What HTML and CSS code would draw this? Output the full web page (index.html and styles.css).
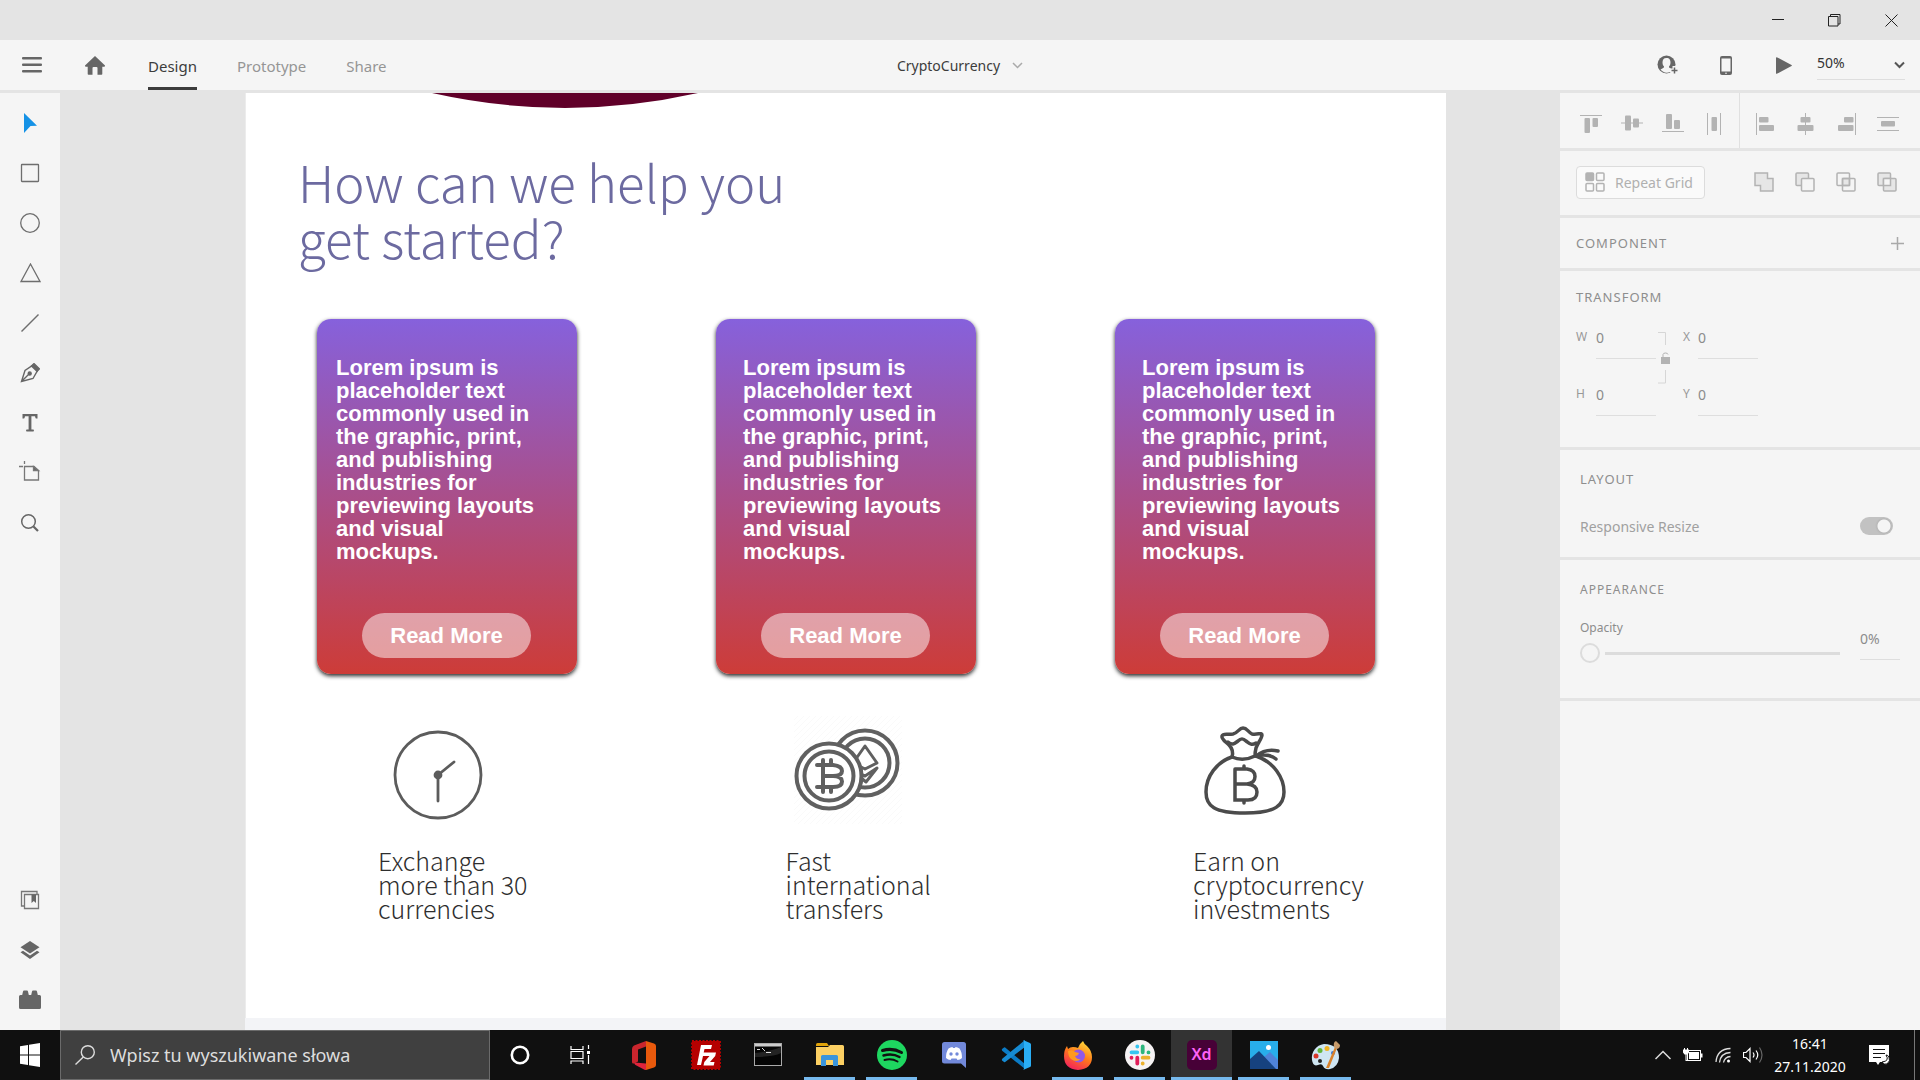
FILE: index.html
```html
<!DOCTYPE html>
<html lang="en">
<head>
<meta charset="utf-8">
<title>CryptoCurrency</title>
<link rel="stylesheet" href="styles.css">
</head>
<body>
<div class="app">
  <div class="titlebar">
    <button class="win-btn" aria-label="Minimize"><svg width="12" height="12"><path d="M0 5.500h12" stroke="#222"/></svg></button>
    <button class="win-btn" aria-label="Restore"><svg width="13" height="13" fill="none" stroke="#222"><path d="M.5 2.500h9.500v9.500h-9.500zM2.500 2.500v-2h9.500v9.500h-2"/></svg></button>
    <button class="win-btn" aria-label="Close"><svg width="13" height="13"><path d="M.5.5l12 12M12.500.5l-12 12" stroke="#222"/></svg></button>
  </div>

  <header class="toolbar">
    <div class="toolbar-left">
      <button class="icon-btn menu-btn" aria-label="Menu"><svg width="20" height="16" fill="#666"><rect width="20" height="2.500" rx="1"/><rect y="6.500" width="20" height="2.500" rx="1"/><rect y="13" width="20" height="2.500" rx="1"/></svg></button>
      <button class="icon-btn home-btn" aria-label="Home"><svg width="20" height="19" fill="#666"><path d="M10 0l10 9.500q.3 1.200-1 1.200h-1.700V18q0 .8-.8.800h-4V12q0-1-1-1h-3q-1 0-1 1v6.800h-4q-.8 0-.8-.8v-7.300H1q-1.300 0-1-1.200z"/></svg></button>
      <nav class="tabs">
        <a class="tab active" href="#design">Design</a>
        <a class="tab" href="#prototype">Prototype</a>
        <a class="tab" href="#share">Share</a>
      </nav>
    </div>
    <button class="doc-title">CryptoCurrency <svg width="11" height="7" fill="none" stroke="#aaa" stroke-width="1.500"><path d="M1 1l4.500 4.500L10 1"/></svg></button>
    <div class="toolbar-right">
      <button class="icon-btn action" aria-label="Invite"><svg width="22" height="20" viewBox="0 0 22 20"><circle cx="9.500" cy="9.500" r="9" fill="#666"/><path d="M9.500 3C6.500 3 5.500 5 5.500 7.500c0 2 .7 3 1.500 4 .3 1-.5 1.500-3.500 3 3 4 9 4.500 12 0-3-1.500-3.800-2-3.500-3 .8-1 1.500-2 1.500-4C13.500 5 12.500 3 9.500 3z" fill="#f5f5f5"/><path d="M17.500 11v8M13 15.500h9" stroke="#f5f5f5" stroke-width="4"/><path d="M17.500 12.500v6M14.500 15.500h6" stroke="#666" stroke-width="1.500"/></svg></button>
      <button class="icon-btn action" aria-label="Device preview"><svg width="12" height="19" viewBox="0 0 12 19"><rect width="12" height="19" rx="2" fill="#666"/><rect x="1.500" y="2.500" width="9" height="13" fill="#f5f5f5"/><circle cx="6" cy="17.300" r=".8" fill="#f5f5f5"/></svg></button>
      <button class="icon-btn action" aria-label="Play"><svg width="16" height="17"><path d="M0 1q0-1.300 1.300-.6L15.500 8q.8.500 0 1L1.300 16.600Q0 17.300 0 16z" fill="#666"/></svg></button>
      <div class="zoom-box">
        <select class="zoom" aria-label="Zoom"><option>50%</option></select>
        <svg class="zoom-chevron" width="11" height="8" fill="none" stroke="#555" stroke-width="2"><path d="M1 1.500L5.500 6 10 1.500"/></svg>
      </div>
    </div>
  </header>

  <div class="workspace">
    <aside class="tools">
      <div class="tool-group">
        <button class="tool" aria-label="Select"><svg width="20" height="20"><path d="M4 0L17 12.700l-6.500.4L4 20z" fill="#1592e6"/></svg></button>
        <button class="tool" aria-label="Rectangle"><svg width="20" height="20" fill="none" stroke="#6e6e6e" stroke-width="1.300"><rect x="1.500" y="1.500" width="17" height="17" rx=".5"/></svg></button>
        <button class="tool" aria-label="Ellipse"><svg width="20" height="20" fill="none" stroke="#6e6e6e" stroke-width="1.300"><circle cx="10" cy="10" r="9.300"/></svg></button>
        <button class="tool" aria-label="Polygon"><svg width="22" height="20" fill="none" stroke="#6e6e6e" stroke-width="1.300"><path d="M11.500 1L21 18.500H2z"/></svg></button>
        <button class="tool" aria-label="Line"><svg width="20" height="20" fill="none" stroke="#6e6e6e" stroke-width="1.400"><path d="M1.500 18.500l17-17"/></svg></button>
        <button class="tool" aria-label="Pen"><svg width="20" height="20" fill="none" stroke="#666" stroke-width="1.400"><path d="M1.500 18.500L5 7.500 12.500 2.500l5 5L13 15.500z M1.500 18.500l7-7"/><circle cx="9.700" cy="10.500" r="1.500" fill="#666"/><path d="M11.500 3L14 .6l5.400 5.200L17 8.300z" fill="#666"/></svg></button>
        <button class="tool" aria-label="Text"><svg width="20" height="20" fill="#666"><path d="M2.500 1h15v4.500q-1.600.3-2-.5L15 3.300h-3.600V16.500h2.100q1 .8 0 2h-7q-1-1 0-2h2.100V3.300H5L4.500 5q-.4.800-2 .5z"/></svg></button>
        <button class="tool" aria-label="Artboard"><svg width="25" height="26" fill="none" stroke="#777" stroke-width="1.300"><path d="M6.500 6.500h9.500l4.500 4V20h-14zM6.500 1v3M1 6.500h4"/><path d="M15.500 6.500v4h5z" fill="#666"/></svg></button>
        <button class="tool" aria-label="Zoom tool"><svg width="20" height="20" fill="none" stroke="#666"><circle cx="8.500" cy="8.500" r="6.800" stroke-width="1.500"/><path d="M13.500 13.500l4.500 4.500" stroke-width="2.200"/></svg></button>
      </div>
      <div class="tool-group">
        <button class="tool" aria-label="Assets"><svg width="20" height="20" fill="none" stroke="#777" stroke-width="1.300"><path d="M4 16H1.500V1.500H17V4"/><path d="M4.500 4.500h14v14h-14z"/><path d="M11.500 4.500h4.500v8.500l-2.200-2-2.300 2z" fill="#666" stroke="none"/></svg></button>
        <button class="tool" aria-label="Layers"><svg width="20" height="18" fill="#666"><path d="M10 0l9.500 6.300L10 12.500.5 6.300z"/><path d="M3 9.700l7 4.800 7-4.800 2.500 1.600L10 18 .5 11.300z"/></svg></button>
        <button class="tool" aria-label="Plugins"><svg width="22" height="20" fill="#666"><path d="M0 6.500q0-1.500 1.500-1.500h1.700L4 1.500q.2-1 1-1h3q.8 0 1 1L9.800 5h2.400L13 1.500q.2-1 1-1h3q.8 0 1 1l.8 3.500h1.700Q22 5 22 6.500v11q0 1.500-1.500 1.500h-19Q0 19 0 17.500z"/></svg></button>
      </div>
    </aside>

    <main class="canvas">
      <div class="artboard">
        <svg class="arc" width="266" height="15"><path d="M0 0A608 608 0 0 0 266 0z" fill="#600029"/></svg>
        <h1 class="headline">How can we help you<br>get started?</h1>
        <div class="cards">
          <article class="card card-first">
            <p class="card-text">Lorem ipsum is<br>placeholder text<br>commonly used in<br>the graphic, print,<br>and publishing<br>industries for<br>previewing layouts<br>and visual<br>mockups.</p>
            <button class="read-more">Read More</button>
          </article>
          <article class="card">
            <p class="card-text">Lorem ipsum is<br>placeholder text<br>commonly used in<br>the graphic, print,<br>and publishing<br>industries for<br>previewing layouts<br>and visual<br>mockups.</p>
            <button class="read-more">Read More</button>
          </article>
          <article class="card">
            <p class="card-text">Lorem ipsum is<br>placeholder text<br>commonly used in<br>the graphic, print,<br>and publishing<br>industries for<br>previewing layouts<br>and visual<br>mockups.</p>
            <button class="read-more">Read More</button>
          </article>
        </div>
        <div class="features">
          <section class="feature">
            <svg class="feature-icon" viewBox="0 0 120 108" fill="none" stroke="#5c5c5c" stroke-width="2.800" stroke-linecap="round"><circle cx="60" cy="59" r="43"/><circle cx="60" cy="59" r="3" fill="#5c5c5c"/><path d="M60 59v26M60 59l16-13"/></svg>
            <p class="feature-text">Exchange<br>more than 30<br>currencies</p>
          </section>
          <section class="feature">
            <svg class="feature-icon" viewBox="0 0 120 108" fill="none" stroke="#606060" stroke-width="4" stroke-linecap="round" stroke-linejoin="round">
              <defs><pattern id="hatch" width="6" height="6" patternUnits="userSpaceOnUse"><path d="M0 6L6 0" stroke="#fafafa" stroke-width="1"/></pattern></defs>
              <rect x="8" y="0" width="108" height="108" fill="url(#hatch)" stroke="none"/>
              <circle cx="79" cy="47" r="32.500" fill="#fff"/><circle cx="79" cy="47" r="24.500"/>
              <path d="M79 30L91 47 79 53 67 47zM67 55l12 5 12-8-11 14z" stroke-width="3"/>
              <circle cx="43" cy="60" r="32.500" fill="#fff"/><circle cx="43" cy="60" r="24.500"/>
              <path d="M31 49h16q9 1 9 6 0 5-9 5 9 0 9 5.500 0 5.500-9 5.500H31M37 49v22M37 60h10M37 44v5M45 44v5M37 71v5M45 71v5"/>
            </svg>
            <p class="feature-text">Fast<br>international<br>transfers</p>
          </section>
          <section class="feature">
            <svg class="feature-icon" viewBox="0 0 120 108" fill="none" stroke="#4b4b4b" stroke-width="3.500" stroke-linecap="round" stroke-linejoin="round">
              <path d="M39 41C24 46 13 60 13 76c0 14 8 21 39 21s39-8 39-21c0-14-10-30-28-36"/>
              <path d="M39 41q2-7-3-12c-3-3-8-6-7-9s5-1 11-2c5-1 6-6 10-6s5 4 9 6c6 1 10-2 10 1s-4 8-6 13q-1 4-1 8q-12 6-23 1z"/>
              <path d="M35 26c5 4 7 1 10-1 3-3 5-3 8 0 3 2 5 5 10 2"/>
              <path d="M63 40q10-8 22-5M63 40q13-3 20 3"/>
              <path d="M42 53h12q8 1 8 7.500t-8 7.500H42M54 68q10 1 10 8 0 8-9 8H42V53M51 50v3M51 84v3" stroke-linejoin="miter"/>
            </svg>
            <p class="feature-text">Earn on<br>cryptocurrency<br>investments</p>
          </section>
        </div>
      </div>
      <div class="artboard-next"></div>
    </main>

    <aside class="inspector">
      <div class="panel align-panel">
        <div class="align-group">
          <button class="slot" aria-label="Align top"><svg width="22" height="20" fill="#b3b3b3"><rect y="1" width="22" height="1"/><rect x="4.500" y="4" width="5.500" height="15" rx="1"/><rect x="12.500" y="4" width="5.500" height="9" rx="1"/></svg></button>
          <button class="slot" aria-label="Align middle"><svg width="22" height="20" fill="#b3b3b3"><rect y="8.500" width="22" height="1"/><rect x="4" y="1.500" width="6" height="15" rx="1"/><rect x="12" y="4.500" width="6" height="9" rx="1"/></svg></button>
          <button class="slot" aria-label="Align bottom"><svg width="22" height="20" fill="#b3b3b3"><rect y="17" width="22" height="1"/><rect x="4" y="0" width="6" height="15" rx="1"/><rect x="12" y="6" width="6" height="9" rx="1"/></svg></button>
          <button class="slot" aria-label="Distribute horizontally"><svg width="22" height="22" fill="#b3b3b3"><rect x="4" width="1" height="22"/><rect x="17" width="1" height="22"/><rect x="8.500" y="4" width="5.500" height="14" rx="1"/></svg></button>
        </div>
        <div class="align-group">
          <button class="slot" aria-label="Align left"><svg width="20" height="22" fill="#b3b3b3"><rect x="1" width="1" height="22"/><rect x="4" y="4" width="9.500" height="5.500" rx="1"/><rect x="4" y="12" width="15" height="6" rx="1"/></svg></button>
          <button class="slot" aria-label="Align center"><svg width="20" height="22" fill="#b3b3b3"><rect x="9" width="1" height="22"/><rect x="4.500" y="4" width="10" height="5.500" rx="1"/><rect x="1.500" y="12" width="16" height="6" rx="1"/></svg></button>
          <button class="slot" aria-label="Align right"><svg width="20" height="22" fill="#b3b3b3"><rect x="18" width="1" height="22"/><rect x="7" y="4" width="9.500" height="5.500" rx="1"/><rect x="1" y="12" width="15.500" height="6" rx="1"/></svg></button>
          <button class="slot" aria-label="Distribute vertically"><svg width="22" height="22" fill="#b3b3b3"><rect y="4" width="22" height="1"/><rect y="17" width="22" height="1"/><rect x="4" y="8" width="14" height="5.500" rx="1"/></svg></button>
        </div>
      </div>

      <div class="panel grid-panel">
        <button class="repeat-grid"><svg width="20" height="20" fill="none" stroke="#b3b3b3" stroke-width="1.500"><rect x="1" y="1" width="7.500" height="7.500" rx="1" fill="#b3b3b3"/><rect x="11.500" y="1" width="7.500" height="7.500" rx="1"/><rect x="1" y="11.500" width="7.500" height="7.500" rx="1"/><rect x="11.500" y="11.500" width="7.500" height="7.500" rx="1"/></svg>Repeat Grid</button>
        <div class="bool-group">
          <button class="slot" aria-label="Add"><svg width="20" height="20" fill="#e6e6e6" stroke="#b3b3b3" stroke-width="1.500"><path d="M1 1h12.500v5.500h5.500v12.500H6.500v-5.500H1z"/></svg></button>
          <button class="slot" aria-label="Subtract"><svg width="20" height="20" fill="#e6e6e6" stroke="#b3b3b3" stroke-width="1.500"><rect x="1" y="1" width="12.500" height="12.500" rx="1"/><rect x="6.500" y="6.500" width="12.500" height="12.500" rx="1" fill="#f5f5f5"/></svg></button>
          <button class="slot" aria-label="Intersect"><svg width="20" height="20" fill="none" stroke="#b3b3b3" stroke-width="1.500"><path d="M6.500 6.500h7v7h-7z" fill="#e6e6e6"/><rect x="1" y="1" width="12.500" height="12.500" rx="1"/><rect x="6.500" y="6.500" width="12.500" height="12.500" rx="1"/></svg></button>
          <button class="slot" aria-label="Exclude overlap"><svg width="20" height="20" fill="#e6e6e6" stroke="#b3b3b3" stroke-width="1.500"><rect x="1" y="1" width="12.500" height="12.500" rx="1"/><rect x="6.500" y="6.500" width="12.500" height="12.500" rx="1"/><path d="M6.500 13.500v-7h7v7z" fill="#f5f5f5"/></svg></button>
        </div>
      </div>

      <div class="panel component-panel">
        <h2 class="panel-title">COMPONENT</h2>
        <button class="icon-btn" aria-label="Add component"><svg width="13" height="13"><path d="M6.500 0v13M0 6.500h13" stroke="#a9a9a9" stroke-width="1.500"/></svg></button>
      </div>

      <div class="panel transform-panel">
        <h2 class="panel-title">TRANSFORM</h2>
        <div class="fields">
          <label class="field-label" for="w">W</label><input class="field" id="w" value="0">
          <svg class="lock" width="14" height="52" fill="none" stroke="#d6d6d6"><path d="M1 .5h7.500V13M8.500 38v13H1"/><rect x="4" y="25" width="9" height="7" fill="#b3b3b3" stroke="none"/><path d="M6 25v-2.500q.2-1.500 2.500-1.500t2.500 1.500" stroke="#b3b3b3"/></svg>
          <label class="field-label" for="x">X</label><input class="field" id="x" value="0">
          <label class="field-label" for="h">H</label><input class="field" id="h" value="0">
          <label class="field-label" for="y">Y</label><input class="field" id="y" value="0">
        </div>
      </div>

      <div class="panel layout-panel">
        <h2 class="panel-title">LAYOUT</h2>
        <div class="resize-row"><label for="resize">Responsive Resize</label><input class="toggle" type="checkbox" id="resize" checked></div>
      </div>

      <div class="panel appearance-panel">
        <h2 class="panel-title small">APPEARANCE</h2>
        <div class="opacity-row">
          <div class="opacity-main"><label class="opacity-label" for="opacity">Opacity</label><input class="slider" type="range" id="opacity" value="0"></div>
          <input class="field opacity-value" aria-label="Opacity value" value="0%">
        </div>
      </div>
      <div class="panel rest-panel"></div>
    </aside>
  </div>

  <footer class="taskbar">
    <button class="task start" aria-label="Start"><svg width="20" height="24" viewBox="0 0 20 20" preserveAspectRatio="none" fill="#fff"><path d="M0 2.800L8 1.700v7.800H0zM9 1.500L20 0v9.500H9zM0 10.500h8v7.800L0 17.200zM9 10.500h11V20L9 18.500z"/></svg></button>
    <div class="search">
      <svg width="20" height="20" fill="none" stroke="#ddd" stroke-width="1.400"><circle cx="12.800" cy="7.200" r="6.500"/><path d="M8.300 12L.5 19.500"/></svg>
      <input class="search-input" aria-label="Search" placeholder="Wpisz tu wyszukiwane słowa">
    </div>
    <button class="task" aria-label="Cortana"><svg width="20" height="20"><circle cx="10" cy="10" r="8.200" fill="none" stroke="#fff" stroke-width="2.600"/></svg></button>
    <button class="task" aria-label="Task view"><svg width="21" height="20" fill="none" stroke="#fff" stroke-width="1.200"><path d="M1 1v3.500h12V1M1 19v-3h12v3M1 6.500h12v7H1zM18.500 0v4M18.500 10v9"/><rect x="17" y="6" width="3" height="3" fill="#fff" stroke="none"/></svg></button>
    <div class="apps">
      <button class="app-btn" aria-label="Office"><svg width="24" height="29" viewBox="0 0 24 29"><path d="M14 0L2 4.500Q0 5.500 0 8v13q0 2 2 1.500l4-2V8.500l8-3z" fill="#c9252d"/><path d="M14 0l8 2.500q2 .7 2 2.500v19q0 1.800-2 2.500L14 29z" fill="#e8590c"/><path d="M3 21.500l11 1V29q-1 0-2-.5L3.500 24q-2-1.500-.5-2.500z" fill="#e0243c"/></svg></button>
      <button class="app-btn" aria-label="FileZilla"><svg width="30" height="30" viewBox="0 0 30 30"><rect x="1" y="1" width="28" height="28" fill="#b50000" stroke="#b50000" stroke-width="2" stroke-dasharray="2 1.500"/><path d="M6 25L10 5h11l-1 4h-6.500l-.8 3.500h5L17 16h-5l-2 9zM15 12.500h10l-.8 3.500-5.200 6h4.500l-.8 3.500H12.500l.8-3.500L18.500 16h-4z" fill="#fff"/></svg></button>
      <button class="app-btn" aria-label="Command prompt"><svg width="28" height="24"><rect x=".5" y=".5" width="27" height="22" fill="#050505" stroke="#aaa"/><path d="M1 1h26v2.500H1z" fill="#ccc"/><path d="M3 6.500h3M8 5l3 3M12 9.500h5" stroke="#ddd"/><path d="M1 10Q18 8 27 4v6Q20 14 1 14z" fill="#fff" opacity=".12"/></svg></button>
      <button class="app-btn open" aria-label="File Explorer"><svg width="28" height="24"><path d="M0 1.500Q0 0 1.500 0H11l2 3h-13z" fill="#e0a30a"/><path d="M0 4h12l2-2h12.500Q28 2 28 3.500V22H0z" fill="#fcd063"/><path d="M5 23v-9.500Q5 12 6.500 12h14q1.500 0 1.500 1.500V23h-5v-6h-7v6z" fill="#3a95dc"/></svg></button>
      <button class="app-btn open" aria-label="Spotify"><svg width="30" height="30" fill="none" stroke="#111" stroke-linecap="round"><circle cx="15" cy="15" r="15" fill="#1ed760" stroke="none"/><path d="M5.500 10.500q10-3 19 2" stroke-width="3"/><path d="M6.500 15.500q9-2.500 16 1.500" stroke-width="2.500"/><path d="M7.500 20q7-2 13 1.500" stroke-width="2"/></svg></button>
      <button class="app-btn" aria-label="Discord"><svg width="24" height="26"><path d="M2.500 0h19Q24 0 24 2.500V26l-5-4.500H2.500Q0 21.500 0 19V2.500Q0 0 2.500 0z" fill="#7289da"/><path d="M4 16q0-6 2.500-9.500 2-1.500 4-1.500l.5 1h2l.5-1q2 0 4 1.500Q20 10 20 16q-2 2-4.500 2l-1-1.500h-5l-1 1.500Q6 18 4 16z" fill="#fff"/><circle cx="9" cy="12" r="1.700" fill="#7289da"/><circle cx="15" cy="12" r="1.700" fill="#7289da"/></svg></button>
      <button class="app-btn" aria-label="Visual Studio Code"><svg width="30" height="30"><path d="M1 9l2-1.500q.8-.5 1.500.2L24 24v5L1.500 11q-1-1-.5-2z" fill="#0b7bc5"/><path d="M1 20.500l2 1.500q.8.500 1.500-.2L24 7V0L1.500 18.500q-1 1-.5 2z" fill="#168bd3"/><path d="M22 0l7 3q1 .5 1 1.500v21q0 1-1 1.500l-7 3q1-.5 1-2V2q0-1-1-2z" fill="#2aaef5"/></svg></button>
      <button class="app-btn open" aria-label="Firefox"><svg width="28" height="29"><defs><linearGradient id="ff" x1=".8" y1="0" x2=".3" y2="1"><stop offset="0" stop-color="#ffe13c"/><stop offset=".5" stop-color="#ff7a1a"/><stop offset="1" stop-color="#f3205e"/></linearGradient></defs><path d="M19 0q1 3 4 5 5 5 5 11 0 12-14 13Q0 28 0 15q0-6 3-10l1 3q2-2 5-2 3 0 5 1Q15 3 19 0z" fill="url(#ff)"/><circle cx="14.500" cy="15" r="6.500" fill="#9059e8"/><path d="M4 10q5-2 7 1l4 1q-1 3-4 3 2 4 6 3-5 4-10 0Q4 15 4 10z" fill="#ff9a1f"/></svg></button>
      <button class="app-btn open" aria-label="Slack"><svg width="30" height="30" fill="none"><circle cx="15" cy="15" r="15" fill="#f6f3f4"/><g stroke-width="3.800" stroke-linecap="round"><path d="M12.300 6.500v.1M6.500 12.300h5.800" stroke="#36c5f0"/><path d="M17.700 6.500v5.800M23.500 12.300v.1" stroke="#2eb67d"/><path d="M12.300 17.700v5.800M6.500 17.700v.1" stroke="#e01e5a"/><path d="M17.700 23.500v.1M17.700 17.700h5.800" stroke="#ecb22e"/></g></svg></button>
      <button class="app-btn open current" aria-label="Adobe XD"><span class="xd">Xd</span></button>
      <button class="app-btn open" aria-label="Photos"><svg width="28" height="28"><path d="M0 0h28v28H0z" fill="#28aeea"/><path d="M14 16l6-5 8 8v9H14z" fill="#4f83d8"/><path d="M0 18L9 10l17 18H0z" fill="#16427f"/><circle cx="18.500" cy="6.500" r="2.500" fill="#fff"/></svg></button>
      <button class="app-btn open" aria-label="Paint"><svg width="30" height="29"><path d="M13 3C5 4 0 11 1 19q1 7 6 5 4-2 5 1 2 4 7 3 8-2 9-11Q28 3 13 3z" fill="#cfe6f3"/><circle cx="5" cy="15" r="2.500" fill="#d8372a"/><circle cx="9" cy="9.500" r="2.500" fill="#63b53b"/><circle cx="16" cy="7.500" r="2.500" fill="#f0b323"/><circle cx="22" cy="12" r="2" fill="#3a78cf"/><circle cx="9" cy="20" r="2" fill="#222"/><path d="M15 27L24 6l2 1-8 20z" fill="#d9822b"/><path d="M23 6q-1-5 2-6l4 4q0 4-4 4z" fill="#c69a6a"/></svg></button>
    </div>
    <div class="tray">
      <svg width="16" height="10" fill="none" stroke="#ddd" stroke-width="1.500"><path d="M.5 9L8 1.500 15.500 9"/></svg>
      <svg width="20" height="14"><rect x="4.500" y="2.500" width="13" height="10" fill="none" stroke="#fff"/><rect x="6" y="4" width="10" height="7" fill="#fff"/><path d="M18 5.500h1.500v4H18z" fill="#fff"/><path d="M0 1.500h6v3L4.500 6.500h-3L0 4.500zM1 0h1v2H1zM4 0h1v2H4zM2.500 6.500h1V12h2v1h-3z" fill="#fff"/></svg>
      <svg width="16" height="16" fill="none" stroke="#ddd" stroke-width="1.300"><path d="M1 15Q2 2 15.500 1.500M4.500 15.500Q5.500 6 15.500 5.500M8.500 15.500Q9.500 10 15.500 9.500"/><circle cx="13.500" cy="14" r="1.500" fill="#fff" stroke="none"/></svg>
      <svg width="20" height="18" fill="none" stroke="#fff" stroke-width="1.200"><path d="M.5 6.500h2.500L7 2.500v13l-4-4H.5zM10 6.500q2 2.500 0 5M13 4.500q3.500 4.500 0 9"/><path d="M16.500 1.500q5 7.500 0 15" stroke="#666"/></svg>
      <div class="clock"><span>16:41</span><span>27.11.2020</span></div>
      <svg class="note" width="22" height="22"><path d="M0 1h20v17h-9l-2 3-2-3H0z" fill="#fff"/><path d="M4 5.500h12M4 9.500h12M4 13.500h8" stroke="#111"/><path d="M17 11q4 6-4 7 2 3 5 2 4-3 2-7-1-2-3-2z" fill="#fff" stroke="#111"/></svg>
      <span class="show-desktop"></span>
    </div>
  </footer>
</div>
</body>
</html>
```
FILE: styles.css
```css
* { box-sizing: border-box; }
body {
  margin: 0;
  font-family: "Noto Sans", "Open Sans", sans-serif;
  font-size: 14px;
  color: #444;
  background: #e4e4e4;
}
button, input, select { font: inherit; color: inherit; background: none; border: 0; padding: 0; border-radius: 0; }
svg { display: block; flex: none; }
h1, h2, p { margin: 0; font-weight: 400; }
.app { min-height: 100vh; display: flex; flex-direction: column; }

.titlebar { height: 40px; display: flex; justify-content: flex-end; }
.win-btn { width: 57px; display: flex; align-items: center; justify-content: center; }

.toolbar { height: 50px; background: #f5f5f5; display: grid; grid-template-columns: 1fr auto 1fr; margin-bottom: 3px; }
.icon-btn { display: flex; align-items: center; justify-content: center; }
.toolbar-left { display: flex; }
.menu-btn { width: 64px; }
.home-btn { width: 62px; }
.tabs { display: flex; gap: 40px; padding-left: 22px; }
.tab { display: flex; align-items: center; padding-top: 5px; font-size: 15px; color: #959595; text-decoration: none; border-bottom: 3px solid transparent; }
.tab.active { color: #3c3c3c; border-color: #3c3c3c; }
.doc-title { display: flex; align-items: center; gap: 12px; color: #3c3c3c; }
.toolbar-right { display: flex; justify-content: flex-end; padding-right: 15px; }
.action { width: 58px; }
.zoom-box { position: relative; width: 88px; margin: 8px 0 10px 4px; border-bottom: 1px solid #dedede; }
.zoom { appearance: none; width: 100%; height: 100%; font-size: 14px; color: #333; padding-bottom: 2px; }
.zoom-chevron { position: absolute; right: 0; top: 13px; pointer-events: none; }

.workspace { flex: 1; display: flex; }
.tools { width: 60px; background: #f5f5f5; padding: 5px 0; display: flex; flex-direction: column; justify-content: space-between; }
.tool-group { display: flex; flex-direction: column; }
.tool { height: 50px; display: flex; align-items: center; justify-content: center; }

.canvas { flex: 1; display: flex; flex-direction: column; padding: 0 114px 0 185px; }
.artboard { flex: 1; background: #fff; border-left: 1px solid #ececec; font-family: "Noto Sans CJK JP", sans-serif; }
.artboard-next { height: 12px; background: #f3f4f7; }
.arc { margin-left: 186px; }
.headline { padding: 45px 0 0 52px; font-size: 51px; line-height: 56px; font-weight: 300; color: #6c6aa0; }
.cards { display: flex; justify-content: space-between; padding: 54px 71px 0; }
.card {
  width: 260px; height: 355px; border-radius: 14px;
  padding: 37px 0 16px 27px;
  background: linear-gradient(#8661dc, #cd3c38);
  box-shadow: 0 2px 4px rgba(0, 0, 0, .85);
  display: flex; flex-direction: column; justify-content: space-between;
  color: #fff; font-family: "Liberation Sans", Arial, sans-serif;
}
.card-first { padding-left: 19px; }
.card-text { font-size: 22px; line-height: 23px; font-weight: 700; white-space: nowrap; }
.read-more { width: 169px; height: 45px; border-radius: 23px; background: rgba(255, 255, 255, .5); font-size: 22px; font-weight: 700; line-height: 45px; margin-left: 18px; }
.card-first .read-more { margin-left: 26px; }
.features { display: flex; justify-content: space-between; padding: 42px 83px 0 132px; }
.feature { width: 170px; }
.feature-icon { width: 120px; height: 108px; }
.feature-text { margin-top: 24px; font-size: 25px; line-height: 24px; font-weight: 300; color: #2e2e2e; white-space: nowrap; }

.inspector { width: 360px; display: flex; flex-direction: column; gap: 3px; color: #999; }
.panel { background: #f5f5f5; }
.slot { width: 41px; display: flex; align-items: center; justify-content: center; }
.align-panel { height: 55px; display: flex; }
.align-group { display: flex; padding: 7px 0 0 10px; }
.align-group + .align-group { border-left: 1px solid #e0e0e0; padding-left: 4px; margin-left: 5px; }
.grid-panel { height: 64px; display: flex; align-items: center; justify-content: space-between; padding: 0 13px 2px 16px; }
.repeat-grid { width: 129px; height: 33px; border: 1px solid #dcdcdc; border-radius: 4px; background: #fafafa; color: #b0b0b0; display: flex; align-items: center; gap: 10px; padding-left: 8px; font-size: 14px; }
.bool-group { display: flex; }
.component-panel { height: 50px; display: flex; align-items: center; justify-content: space-between; padding: 0 16px; }
.panel-title { font-size: 13px; line-height: 20px; letter-spacing: 1px; color: #8e8e8e; }
.panel-title.small { font-size: 12px; line-height: 22px; }
.transform-panel { height: 176px; padding: 16px; }
.fields { display: grid; grid-template-columns: 20px 60px 27px 15px 60px; row-gap: 24px; margin-top: 19px; }
.field-label { font-size: 12px; line-height: 22px; }
.field { width: 60px; height: 33px; padding-bottom: 10px; font-size: 14px; border-bottom: 1px solid #dedede; color: #8c8c8c; }
.lock { grid-row: 1 / 3; grid-column: 3; margin: 6px 0 0 1px; }
.layout-panel { height: 107px; padding: 19px 27px 0 20px; }
.resize-row { display: flex; justify-content: space-between; align-items: center; margin-top: 26px; height: 22px; font-size: 14px; color: #a0a0a0; }
.toggle { appearance: none; width: 33px; height: 18px; margin: 0; border-radius: 9px; background: radial-gradient(circle at 24px 9px, #f5f5f5 6px, #b8b8b8 7px, #c2c2c2 9px); }
.appearance-panel { height: 138px; padding: 19px 20px 0; }
.opacity-row { display: flex; justify-content: space-between; margin-top: 17px; }
.opacity-main { width: 260px; display: flex; flex-direction: column; gap: 6px; }
.opacity-label { font-size: 12px; line-height: 19px; color: #8c8c8c; }
.slider { appearance: none; width: 260px; height: 20px; margin: 0; background: linear-gradient(to right, transparent 25px, #dcdcdc 25px) center / 100% 3px no-repeat; }
.slider::-webkit-slider-thumb { appearance: none; width: 20px; height: 20px; border: 2px solid #dcdcdc; border-radius: 50%; background: #f5f5f5; }
.opacity-value { width: 40px; margin-top: 9px; }
.rest-panel { flex: 1; }

.taskbar { height: 50px; background: #101010; color: #fff; display: flex; }
.task { width: 60px; display: flex; align-items: center; justify-content: center; }
.search { width: 430px; background: #404040; border: 1px solid #6b6b6b; display: flex; align-items: center; gap: 15px; padding-left: 14px; }
.search-input { flex: 1; font-size: 18px; color: #fff; }
.search-input::placeholder { color: #ddd; opacity: 1; }
.apps { display: flex; gap: 1px; padding-left: 3px; }
.app-btn { width: 61px; display: flex; align-items: center; justify-content: center; }
.app-btn.open { background: linear-gradient(#76b9ed, #76b9ed) center bottom / 51px 3px no-repeat; }
.app-btn.open.current { background-size: 61px 3px; background-color: #333; }
.xd { width: 30px; height: 30px; border-radius: 5px; background: #470137; color: #ff61f6; font-size: 16px; line-height: 29px; font-weight: 600; }
.tray { flex: 1; display: flex; align-items: center; justify-content: flex-end; gap: 12px; }
.clock { width: 82px; margin-left: -6px; display: flex; flex-direction: column; align-items: center; font-size: 14px; line-height: 23px; }
.note { margin-left: 6px; }
.show-desktop { width: 6px; align-self: stretch; border-left: 1px solid #777; margin-left: 11px; }
```
